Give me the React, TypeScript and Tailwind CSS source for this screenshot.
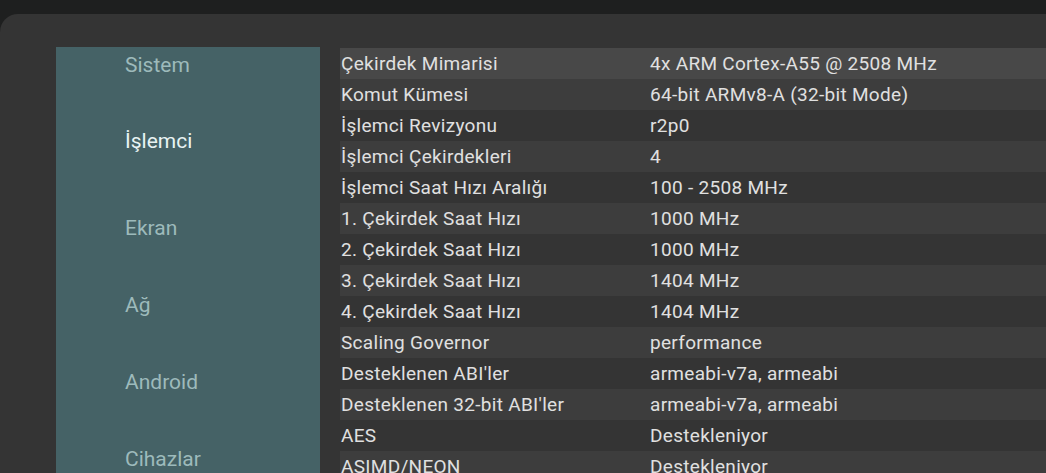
const menu = [
  { label: "Sistem", cls: "mt-[5px] text-[#9dbabb]" },
  { label: "İşlemci", cls: "mt-[50px] text-[#e8f3f3]" },
  { label: "Ekran", cls: "mt-[61px] text-[#9dbabb]" },
  { label: "Ağ", cls: "mt-[51px] text-[#9dbabb]" },
  { label: "Android", cls: "mt-[51px] text-[#9dbabb]" },
  { label: "Cihazlar", cls: "mt-[51px] text-[#9dbabb]" },
];

const rows: [string, string][] = [
  ["Çekirdek Mimarisi", "4x ARM Cortex-A55 @ 2508 MHz"],
  ["Komut Kümesi", "64-bit ARMv8-A (32-bit Mode)"],
  ["İşlemci Revizyonu", "r2p0"],
  ["İşlemci Çekirdekleri", "4"],
  ["İşlemci Saat Hızı Aralığı", "100 - 2508 MHz"],
  ["1. Çekirdek Saat Hızı", "1000 MHz"],
  ["2. Çekirdek Saat Hızı", "1000 MHz"],
  ["3. Çekirdek Saat Hızı", "1404 MHz"],
  ["4. Çekirdek Saat Hızı", "1404 MHz"],
  ["Scaling Governor", "performance"],
  ["Desteklenen ABI'ler", "armeabi-v7a, armeabi"],
  ["Desteklenen 32-bit ABI'ler", "armeabi-v7a, armeabi"],
  ["AES", "Destekleniyor"],
  ["ASIMD/NEON", "Destekleniyor"],
];

export default function App() {
  return (
    <div
      className="w-[1046px] h-[473px] overflow-hidden bg-[#1e1f1f] flex flex-col"
      style={{ fontFamily: "Roboto, 'Noto Sans', sans-serif" }}
    >
      <div className="h-[14px] shrink-0" />
      <div className="flex-1 bg-[#343434] rounded-tl-[18px] pl-[56px] pt-[33px] flex gap-[20px] min-h-0">
        {/* left menu */}
        <div className="w-[264px] shrink-0 bg-[#456266] flex flex-col pl-[69px]">
          {menu.map((m) => (
            <div key={m.label} className={`text-[21px] leading-[26px] ${m.cls}`}>
              {m.label}
            </div>
          ))}
        </div>

        {/* cpu table */}
        <div className="flex-1 flex flex-col mt-px">
          {rows.map(([k, v], i) => (
            <div
              key={k}
              className={`h-[31px] shrink-0 grid grid-cols-[309px_1fr] items-center text-[19px] leading-[24px] tracking-[0.3px] text-[#e0e0e0] pl-px ${
                i === 0 ? "bg-[#484848]" : i % 2 === 1 ? "bg-[#3d3d3d]" : ""
              }`}
            >
              <span className="whitespace-nowrap">{k}</span>
              <span className="whitespace-nowrap">{v}</span>
            </div>
          ))}
        </div>
      </div>
    </div>
  );
}
